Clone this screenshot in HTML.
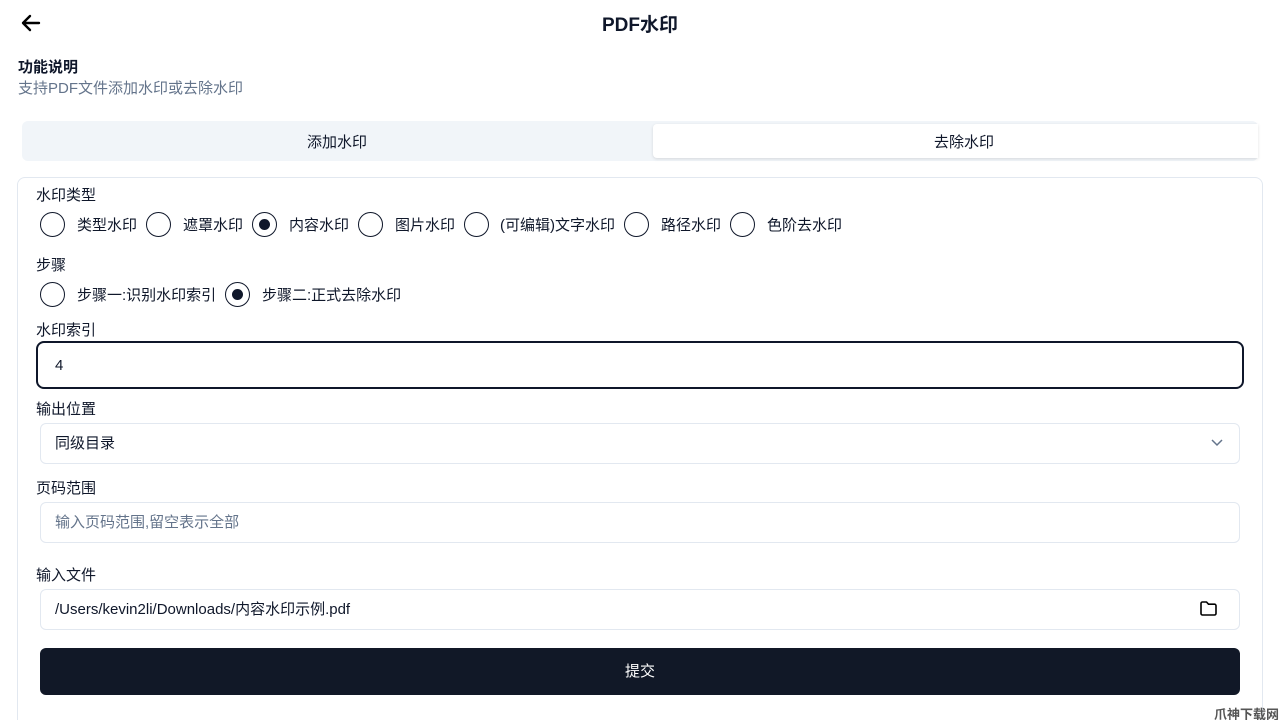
<!DOCTYPE html>
<html><head><meta charset="utf-8"><style>
*{box-sizing:border-box;margin:0;padding:0}
html,body{width:1280px;height:720px;overflow:hidden}
body{background:#fff;font-family:"Liberation Sans","Noto Sans CJK SC",sans-serif;color:#0f172a;position:relative}
.a{position:absolute;white-space:nowrap}
.t{font-size:15px}
.r{position:absolute;width:25px;height:25px;border:1.5px solid #0f172a;border-radius:50%}
.r.on::after{content:"";position:absolute;left:5.5px;top:5.5px;width:11px;height:11px;border-radius:50%;background:#0f172a}
.in{position:absolute;left:40px;width:1200px;height:41px;border:1px solid #e2e8f0;border-radius:6px;font-size:15px;padding-left:14px;line-height:39px}
</style></head><body>
<svg class="a" style="left:20px;top:12px" width="22" height="22" viewBox="0 0 22 22"><path d="M19 11H3M10 4L3 11l7 7" fill="none" stroke="#000" stroke-width="2.4" stroke-linecap="round" stroke-linejoin="round"/></svg>
<div class="a" style="left:0;width:1280px;text-align:center;top:10px;font-size:19px;font-weight:bold">PDF水印</div>
<div class="a" style="left:18px;top:56px;font-size:15px;font-weight:bold">功能说明</div>
<div class="a" style="left:18px;top:77px;font-size:15px;color:#64748b">支持PDF文件添加水印或去除水印</div>
<div class="a" style="left:22px;top:121px;width:1236px;height:40px;background:#f1f5f9;border-radius:6px"></div>
<div class="a" style="left:22px;width:630px;top:131px;text-align:center"><span class="t">添加水印</span></div>
<div class="a" style="left:653px;top:124px;width:605px;height:34px;background:#fff;border-radius:4px 0 0 4px;box-shadow:0 1px 3px rgba(0,0,0,.12)"></div>
<div class="a" style="left:653px;width:622px;top:131px;text-align:center"><span class="t">去除水印</span></div>
<div class="a" style="left:17px;top:177px;width:1246px;height:560px;border:1px solid #e2e8f0;border-radius:8px"></div>
<div class="a t" style="left:36px;top:184px">水印类型</div>
<div class="r" style="left:40px;top:212px"></div><div class="a t" style="left:77px;top:214px">类型水印</div>
<div class="r" style="left:146px;top:212px"></div><div class="a t" style="left:183px;top:214px">遮罩水印</div>
<div class="r on" style="left:252px;top:212px"></div><div class="a t" style="left:289px;top:214px">内容水印</div>
<div class="r" style="left:358px;top:212px"></div><div class="a t" style="left:395px;top:214px">图片水印</div>
<div class="r" style="left:464px;top:212px"></div><div class="a t" style="left:500px;top:214px">(可编辑)文字水印</div>
<div class="r" style="left:624px;top:212px"></div><div class="a t" style="left:661px;top:214px">路径水印</div>
<div class="r" style="left:730px;top:212px"></div><div class="a t" style="left:767px;top:214px">色阶去水印</div>
<div class="a t" style="left:36px;top:254px">步骤</div>
<div class="r" style="left:40px;top:282px"></div><div class="a t" style="left:77px;top:284px">步骤一:识别水印索引</div>
<div class="r on" style="left:225px;top:282px"></div><div class="a t" style="left:262px;top:284px">步骤二:正式去除水印</div>
<div class="a t" style="left:36px;top:319px">水印索引</div>
<div class="a" style="left:36px;top:341px;width:1208px;height:48px;border:2.5px solid #0f172a;border-radius:8px;font-size:15px;padding-left:17px;line-height:45px">4</div>
<div class="a t" style="left:36px;top:398px">输出位置</div>
<div class="in" style="top:423px">同级目录</div>
<svg class="a" style="left:1210px;top:437px" width="14" height="12" viewBox="0 0 14 12"><path d="M2 3l5 5 5-5" fill="none" stroke="#64748b" stroke-width="1.5"/></svg>
<div class="a t" style="left:36px;top:477px">页码范围</div>
<div class="in" style="top:502px;color:#64748b">输入页码范围,留空表示全部</div>
<div class="a t" style="left:36px;top:564px">输入文件</div>
<div class="in" style="top:589px">/Users/kevin2li/Downloads/内容水印示例.pdf</div>
<svg class="a" style="left:1199px;top:600px" width="19" height="17" viewBox="0 0 19 17"><path d="M2 3.5a1.5 1.5 0 0 1 1.5-1.5h4l2 2.2h6a1.5 1.5 0 0 1 1.5 1.5v7.8a1.5 1.5 0 0 1-1.5 1.5h-12A1.5 1.5 0 0 1 2 13.5z" fill="none" stroke="#000" stroke-width="1.6" stroke-linejoin="round"/></svg>
<div class="a" style="left:40px;top:648px;width:1200px;height:47px;background:#111827;border-radius:6px;color:#fff;text-align:center;line-height:47px;font-size:15px">提交</div>
<div class="a" style="left:1214px;top:704px;font-size:13px;color:#555;font-weight:bold">爪神下载网</div>
</body></html>
